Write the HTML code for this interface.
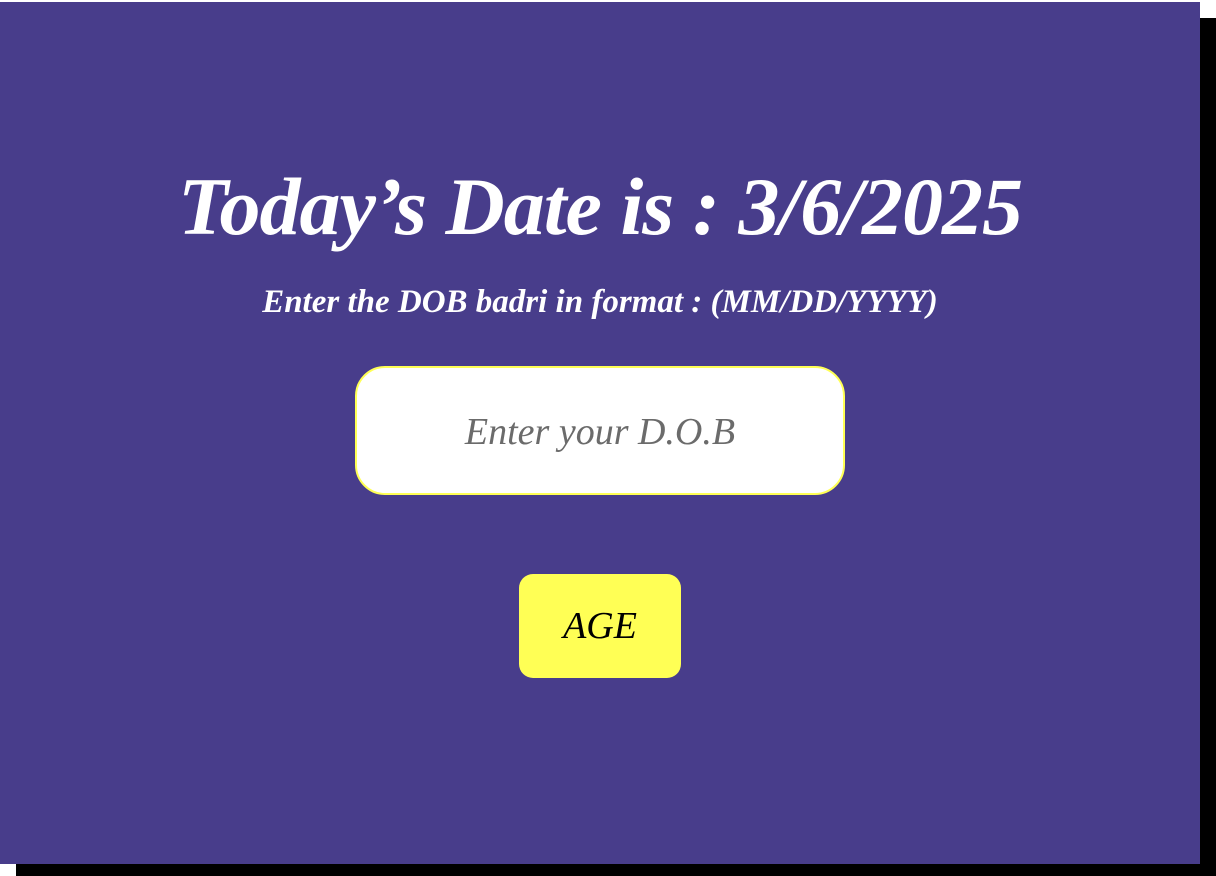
<!DOCTYPE html>
<html><head><meta charset="utf-8"><style>
html,body{margin:0;padding:0;background:#fff;width:1216px;height:876px;overflow:hidden}
.box{position:absolute;left:0;top:2px;width:1200px;height:862px;background:#483d8b;box-shadow:16px 16px 0 #000;font-family:"Liberation Serif",serif;font-style:italic;color:#fff}
h1{position:absolute;left:0;width:1200px;top:150px;margin:0;text-align:center;font-size:82px;font-weight:bold;line-height:110px;letter-spacing:-1px}
.sub{position:absolute;left:0;width:1200px;top:280px;text-align:center;font-size:33px;line-height:40px;font-weight:bold}
.inp{position:absolute;left:355px;top:364px;width:486px;height:125px;background:#fff;border:2px solid #ffff55;border-radius:30px;text-align:center;line-height:128px;font-size:38px;color:#6b6b6b}
.btn{position:absolute;left:519px;top:572px;width:162px;height:104px;background:#ffff55;border-radius:14px;text-align:center;line-height:104px;font-size:38px;color:#000}
</style></head><body>
<div class="box">
<h1>Today’s Date is : 3/6/2025</h1>
<div class="sub">Enter the DOB badri in format : (MM/DD/YYYY)</div>
<div class="inp">Enter your D.O.B</div>
<div class="btn">AGE</div>
</div>
</body></html>
